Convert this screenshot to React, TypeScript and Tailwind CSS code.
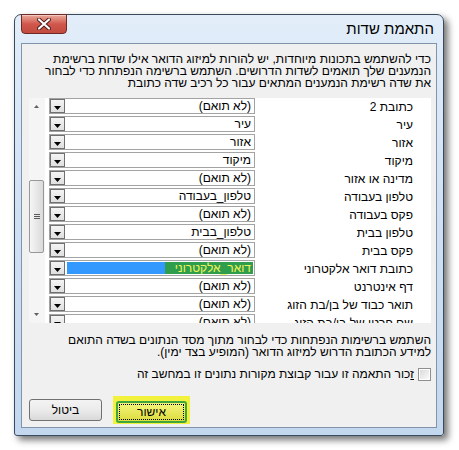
const font = "font-['Liberation_Sans','DejaVu_Sans',sans-serif]"

type Row = { label: string; value: string; selected?: boolean }

const rows: Row[] = [
  { label: "כתובת 2", value: "(לא תואם)" },
  { label: "עיר", value: "עיר" },
  { label: "אזור", value: "אזור" },
  { label: "מיקוד", value: "מיקוד" },
  { label: "מדינה או אזור", value: "(לא תואם)" },
  { label: "טלפון בעבודה", value: "טלפון_בעבודה" },
  { label: "פקס בעבודה", value: "(לא תואם)" },
  { label: "טלפון בבית", value: "טלפון_בבית" },
  { label: "פקס בבית", value: "(לא תואם)" },
  { label: "כתובת דואר אלקטרוני", value: "דואר_אלקטרוני", selected: true },
  { label: "דף אינטרנט", value: "(לא תואם)" },
  { label: "תואר כבוד של בן/בת הזוג", value: "(לא תואם)" },
  { label: "שם פרטי של בן/בת הזוג", value: "(לא תואם)" },
]

function DownArrow() {
  return (
    <svg width="7" height="4" viewBox="0 0 7 4">
      <path d="M0 0H7L3.5 4Z" fill="#000" />
    </svg>
  )
}

function Combo({ row }: { row: Row }) {
  return (
    <div className="flex h-[16px] border border-[#a3a3a3] bg-white">
      <div className="w-[15px] h-[14px] shrink-0 border border-[#707070] bg-gradient-to-b from-[#f4f4f4] to-[#e0e0e0] flex items-end justify-center pb-[2px]">
        <DownArrow />
      </div>
      {row.selected ? (
        <div className="flex-1 ml-[2px] my-[1px] mr-[1px] bg-[#3399ff] flex" dir="rtl">
          <div className="w-[88px] h-full bg-[#2e9e4c] text-[#f2f25a] text-[12px] leading-[12px] pr-[2px]">{row.value}</div>
        </div>
      ) : (
        <div className="flex-1 pr-[3px] text-[12px] leading-[14px] text-black" dir="rtl">{row.value}</div>
      )}
    </div>
  )
}

function Scrollbar() {
  return (
    <div className="w-[16px] h-full bg-[#f5f5f5] flex flex-col items-start">
      <div className="h-[15px] w-[15px] flex items-center justify-center pt-[2px]">
        <svg width="5" height="3" viewBox="0 0 5 3">
          <path d="M0 3H5L2.5 0Z" fill="#606060" />
        </svg>
      </div>
      <div className="mt-[67px] w-[15px] h-[73px] rounded-[2px] border border-[#989898] bg-gradient-to-r from-[#f6f6f6] to-[#dadada] flex items-center justify-center">
        <div className="flex flex-col gap-[1px]">
          <div className="w-[6px] h-[1px] bg-[#5a5a5a]" />
          <div className="w-[6px] h-[1px] bg-[#5a5a5a]" />
          <div className="w-[6px] h-[1px] bg-[#5a5a5a]" />
        </div>
      </div>
      <div className="flex-1" />
      <div className="h-[17px] w-[15px] flex items-center justify-center">
        <svg width="5" height="3" viewBox="0 0 5 3">
          <path d="M0 0H5L2.5 3Z" fill="#606060" />
        </svg>
      </div>
    </div>
  )
}

function CloseButton() {
  return (
    <div className="-mt-[1px] w-[46px] h-[20px] rounded-b-[4px] border border-[#6f2a25] bg-gradient-to-b from-[#e8a89c] via-[#d1574d] to-[#c24a3e] flex items-center justify-center shadow-[inset_0_1px_0_rgba(255,255,255,0.4)]">
      <svg width="14" height="12" viewBox="0 0 14 12">
        <path d="M2 1.5L12 10.5M12 1.5L2 10.5" stroke="#4a1a16" strokeWidth="4" strokeLinecap="round" />
        <path d="M2 1.5L12 10.5M12 1.5L2 10.5" stroke="#ffffff" strokeWidth="2.2" strokeLinecap="round" />
      </svg>
    </div>
  )
}

export default function App() {
  return (
    <div className={`w-[459px] h-[450px] bg-white pt-[14px] pl-[14px] ${font}`}>
      <div className="w-[430px] h-[422px] rounded-t-[7px] rounded-b-[3px] border border-[#39495e] bg-gradient-to-b from-[#e2edf9] via-[#cfe0f3] to-[#c3d8ee] shadow-[4px_4px_7px_rgba(0,0,0,0.55)] px-[6px] pb-[7px] flex flex-col">
        <div className="h-[28px] flex justify-between" dir="ltr">
          <CloseButton />
          <div className="pt-[6px] pr-[3px] text-[15px] leading-[16px] text-black" dir="rtl">התאמת שדות</div>
        </div>

        <div className="flex-1 border border-[#8294ac] bg-[#f0f0f0] flex flex-col" dir="rtl">
          <p className="mt-[9px] pr-[5px] text-[12px] leading-[12px] text-black">
            כדי להשתמש בתכונות מיוחדות, יש להורות למיזוג הדואר אילו שדות ברשימת
            <br />
            הנמענים שלך תואמים לשדות הדרושים. השתמש ברשימה הנפתחת כדי לבחור
            <br />
            את שדה רשימת הנמענים המתאים עבור כל רכיב שדה כתובת
          </p>

          <div className="mt-[9px] mr-[5px] ml-[7px] h-[225px] bg-white flex overflow-hidden" dir="ltr">
            <Scrollbar />
            <div className="w-[206px] ml-[4px] flex flex-col">
              {rows.map((r) => (
                <div key={r.label} className="h-[18px] shrink-0">
                  <Combo row={r} />
                </div>
              ))}
            </div>
            <div className="flex-1 flex flex-col">
              {rows.map((r) => (
                <div key={r.label} className="h-[18px] shrink-0 pr-[18px] pt-[2px] text-[12px] leading-[14px] text-black" dir="rtl">
                  {r.label}
                </div>
              ))}
            </div>
          </div>

          <p className="mt-[11px] pr-[5px] text-[12px] leading-[12px] text-black">
            השתמש ברשימות הנפתחות כדי לבחור מתוך מסד הנתונים בשדה התואם
            <br />
            למידע הכתובת הדרוש למיזוג הדואר (המופיע בצד ימין).
          </p>

          <label className="mt-[10px] mr-[5px] flex items-center gap-[4px] text-[12px] leading-[13px] text-black">
            <span className="w-[13px] h-[13px] border border-[#8e8f8f] bg-white p-[1px]">
              <span className="block w-full h-full bg-gradient-to-br from-[#dadada] to-[#fafafa]" />
            </span>
            <span>
              <span className="underline">ז</span>כור התאמה זו עבור קבוצת מקורות נתונים זו במחשב זה
            </span>
          </label>

          <div className="mt-[15px] pl-[7px] flex items-center gap-[11px]" dir="ltr">
            <button className="w-[73px] h-[22px] rounded-[3px] border border-[#707070] bg-gradient-to-b from-[#f3f3f3] via-[#ebebeb] to-[#d9d9d9] text-[12px] text-black">
              ביטול
            </button>
            <div className="w-[77px] h-[28px] bg-[#f2f23c] p-[3px]">
              <button className="w-[71px] h-[22px] rounded-[3px] border-2 border-[#3fa53f] bg-gradient-to-b from-[#f5f57c] to-[#dcdc3a] p-[1px]">
                <span className="block h-full border border-dotted border-black text-[12px] leading-[14px] text-black">אישור</span>
              </button>
            </div>
          </div>
        </div>
      </div>
    </div>
  )
}
